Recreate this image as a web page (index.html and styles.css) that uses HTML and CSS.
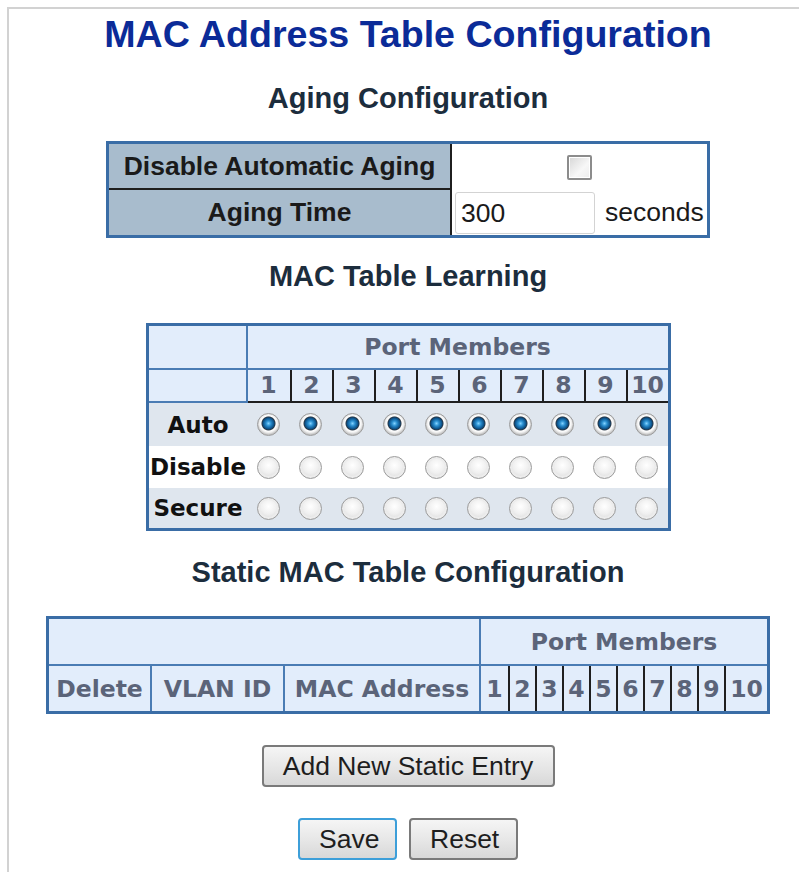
FILE: index.html
```html
<!DOCTYPE html>
<html>
<head>
<meta charset="utf-8">
<title>MAC Address Table Configuration</title>
<link rel="stylesheet" href="styles.css">
</head>
<body>
<div class="frame">
  <h1 class="title">MAC Address Table Configuration</h1>

  <h2 class="sub sub-aging">Aging Configuration</h2>
  <table class="aging">
    <tr>
      <td class="lbl lbl-top">Disable Automatic Aging</td>
      <td class="val val-center"><span class="chk"></span></td>
    </tr>
    <tr>
      <td class="lbl lbl-bottom">Aging Time</td>
      <td class="val"><div class="time-row"><span class="txt">300</span><span class="unit">seconds</span></div></td>
    </tr>
  </table>

  <h2 class="sub sub-learn">MAC Table Learning</h2>
  <table class="learn">
    <tr class="hd1">
      <th class="corner"></th>
      <th class="pm" colspan="10">Port Members</th>
    </tr>
    <tr class="hd2">
      <th class="corner"></th>
      <th class="num first">1</th><th class="num">2</th><th class="num">3</th><th class="num">4</th><th class="num">5</th>
      <th class="num">6</th><th class="num">7</th><th class="num">8</th><th class="num">9</th><th class="num">10</th>
    </tr>
    <tr class="row alt r-auto">
      <td class="rl">Auto</td>
      <td><span class="radio on"></span></td><td><span class="radio on"></span></td><td><span class="radio on"></span></td><td><span class="radio on"></span></td><td><span class="radio on"></span></td>
      <td><span class="radio on"></span></td><td><span class="radio on"></span></td><td><span class="radio on"></span></td><td><span class="radio on"></span></td><td><span class="radio on"></span></td>
    </tr>
    <tr class="row r-disable">
      <td class="rl">Disable</td>
      <td><span class="radio"></span></td><td><span class="radio"></span></td><td><span class="radio"></span></td><td><span class="radio"></span></td><td><span class="radio"></span></td>
      <td><span class="radio"></span></td><td><span class="radio"></span></td><td><span class="radio"></span></td><td><span class="radio"></span></td><td><span class="radio"></span></td>
    </tr>
    <tr class="row alt r-secure">
      <td class="rl">Secure</td>
      <td><span class="radio"></span></td><td><span class="radio"></span></td><td><span class="radio"></span></td><td><span class="radio"></span></td><td><span class="radio"></span></td>
      <td><span class="radio"></span></td><td><span class="radio"></span></td><td><span class="radio"></span></td><td><span class="radio"></span></td><td><span class="radio"></span></td>
    </tr>
  </table>

  <h2 class="sub sub-static">Static MAC Table Configuration</h2>
  <table class="static">
    <tr class="s1">
      <th class="blank" colspan="3"></th>
      <th class="pm" colspan="10">Port Members</th>
    </tr>
    <tr class="s2">
      <th class="c-del">Delete</th>
      <th class="c-vid">VLAN ID</th>
      <th class="c-mac">MAC Address</th>
      <th class="p first">1</th><th class="p">2</th><th class="p">3</th><th class="p">4</th><th class="p">5</th>
      <th class="p">6</th><th class="p">7</th><th class="p">8</th><th class="p">9</th><th class="p p10">10</th>
    </tr>
  </table>

  <div class="btn-row btn-row-add">
    <span class="btn btn-add">Add New Static Entry</span>
  </div>
  <div class="btn-row btn-row-save">
    <span class="btn btn-save">Save</span>
    <span class="btn btn-reset">Reset</span>
  </div>
</div>
</body>
</html>
```

FILE: styles.css
```css
html, body {
  margin: 0;
  padding: 0;
  background: #ffffff;
  overflow: hidden;
}

.frame {
  margin: 7px 0 0 7px;
  width: 798px;
  height: 880px;
  border-top: 2px solid #d2d2d2;
  border-left: 2px solid #d2d2d2;
  font-family: "Liberation Sans", Arial, sans-serif;
}

.title {
  margin: 3px 0 0;
  font-size: 37.6px;
  line-height: 44px;
  font-weight: bold;
  color: #0b2b98;
  text-align: center;
}

.sub {
  margin: 0;
  font-size: 29px;
  line-height: 34px;
  font-weight: bold;
  color: #1c2d3d;
  text-align: center;
}
.sub-aging { margin-top: 25px; }
.sub-learn { margin-top: 21px; }
.sub-static { margin-top: 24px; }

/* ---------- Aging table ---------- */
.aging {
  margin: 26px auto 0;
  width: 604px;
  border: 3px solid #3a6da6;
  border-spacing: 0;
}
.aging td { padding: 0; }
.lbl {
  width: 341px;
  background: #a8bccd;
  border-right: 2px solid #1f1f1f;
  text-align: center;
  font-size: 26.5px;
  font-weight: bold;
  color: #1a1a1a;
}
.lbl-top { height: 44px; border-bottom: 2px solid #1f1f1f; }
.lbl-bottom { height: 45px; }
.val-center { text-align: center; }
.chk {
  display: inline-block;
  width: 21px;
  height: 21px;
  vertical-align: middle;
  border: 2px solid #8c8c8c;
  border-radius: 2px;
  background: linear-gradient(135deg, #d6d6d6 0%, #f7f7f7 60%, #ececec 100%);
  box-shadow: inset 0 0 0 1px #ffffff;
}
.time-row {
  display: flex;
  align-items: center;
  padding-left: 3px;
}
.txt {
  box-sizing: border-box;
  width: 140px;
  height: 42px;
  padding: 0 5px;
  border: 1px solid #d3d3d3;
  border-radius: 3px;
  font-size: 26.5px;
  line-height: 40px;
  color: #1a1a1a;
  background: #ffffff;
}
.unit {
  margin-left: 10px;
  font-size: 26.5px;
  color: #1a1a1a;
}

/* ---------- Learning table ---------- */
.learn {
  margin: 30px auto 0;
  width: 525px;
  border: 3px solid #3a6da6;
  border-spacing: 0;
  font-family: "DejaVu Sans", Verdana, sans-serif;
}
.learn th, .learn td { padding: 0; }
.learn th {
  background: #e2edfb;
  color: #5b6479;
  font-size: 23.5px;
  font-weight: bold;
}
.learn .corner {
  width: 97px;
  border-right: 2px solid #4a7cb4;
  border-bottom: 2px solid #4a7cb4;
}
.hd1 th { height: 42px; }
.hd1 .pm { border-bottom: 2px solid #4a7cb4; }
.hd2 th { height: 31px; line-height: 31px; }
.learn .num {
  width: 40px;
  border-left: 2px solid #1f1f1f;
  border-bottom: 2px solid #1f1f1f;
}
.learn .num.first { border-left: none; width: 42px; }
.learn td {
  text-align: center;
  vertical-align: middle;
}
.learn .rl {
  font-size: 23px;
  font-weight: bold;
  color: #111111;
}
.row.alt td { background: #dfe6ee; }
.r-auto td { height: 43px; }
.r-disable td { height: 42px; }
.r-secure td { height: 40px; }

.radio {
  display: inline-block;
  box-sizing: border-box;
  width: 23px;
  height: 23px;
  vertical-align: middle;
  border-radius: 50%;
  border: 1.5px solid #9c9c9c;
  background: radial-gradient(circle at 50% 40%, #ffffff 0%, #f0f0f0 45%, #d0d0d0 100%);
  box-shadow: inset 0 0 0 2px #ececec;
}
.radio.on {
  background: radial-gradient(circle at 50% 45%, #84d3ff 0px, #2a8fd0 2.5px, #0b4f86 5.5px, #283746 6.5px, #ffffff 7.5px, #f0f0f0 9px, #c4c4c4 11px);
  box-shadow: none;
}

/* ---------- Static table ---------- */
.static {
  margin: 27px auto 0;
  width: 724px;
  border: 3px solid #3a6da6;
  border-spacing: 0;
  font-family: "DejaVu Sans", Verdana, sans-serif;
}
.static th {
  padding: 0;
  background: #e2edfb;
  color: #5b6479;
  font-size: 23.5px;
  font-weight: bold;
  text-align: center;
}
.s1 th { height: 45px; border-bottom: 2px solid #4a7cb4; }
.s1 .blank { border-right: 2px solid #4a7cb4; }
.s2 th { height: 45px; }
.c-del { width: 101px; border-right: 2px solid #4a7cb4; }
.c-vid { width: 131px; border-right: 2px solid #4a7cb4; }
.c-mac { width: 194px; border-right: 2px solid #4a7cb4; }
.static .p { width: 25px; border-left: 2px solid #1f1f1f; }
.static .p.first { border-left: none; width: 27px; }
.static .p10 { width: 41px; }

/* ---------- Buttons ---------- */
.btn-row {
  display: flex;
  justify-content: center;
  gap: 12px;
}
.btn-row-add { margin-top: 31px; }
.btn-row-save { margin-top: 31px; }
.btn {
  box-sizing: border-box;
  height: 42px;
  padding: 0 19px;
  border: 2px solid #7a7a7a;
  border-radius: 4px;
  background: linear-gradient(#f5f5f5, #e6e6e6 55%, #d8d8d8);
  font-size: 26.5px;
  line-height: 38px;
  color: #1e1e1e;
}
.btn-add { width: 293px; text-align: center; }
.btn-save { width: 99px; text-align: center; border-color: #3d9fd9; }
.btn-reset { width: 109px; text-align: center; }
```
